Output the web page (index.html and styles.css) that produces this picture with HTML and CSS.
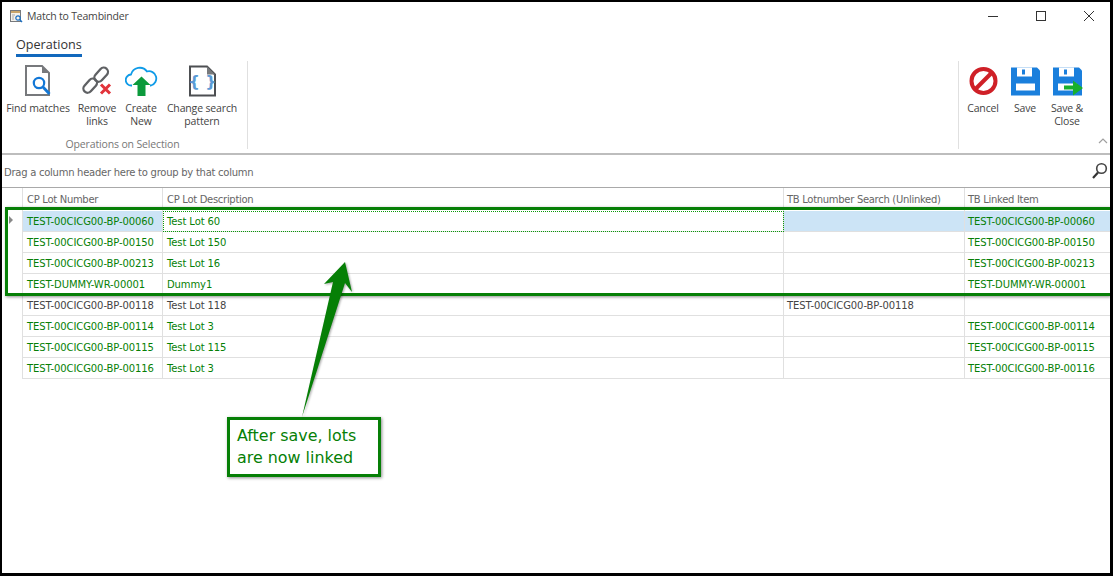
FILE: index.html
```html
<!DOCTYPE html>
<html lang="en">
<head>
<meta charset="utf-8">
<title>Match to Teambinder</title>
<link rel="stylesheet" href="styles.css">
</head>
<body>
<div class="window">
  <header class="titlebar">
    <svg class="app-icon" width="14" height="14" viewBox="0 0 14 14"><rect x="1.5" y="1.5" width="10" height="11" fill="#f4f1ea" stroke="#77797c"/><path d="M2 2h9v2H2z" fill="#c9a56a"/><path d="M3 6h3M3 8h2M3 10h2" stroke="#a9a9a9"/><circle cx="9" cy="9" r="2.2" fill="none" stroke="#1a6fc4" stroke-width="1.2"/><path d="M10.6 10.6L13 13" stroke="#1a6fc4" stroke-width="1.4"/></svg>
    <span class="title">Match to Teambinder</span>
    <div class="controls">
      <svg width="10" height="10" viewBox="0 0 10 10"><path d="M0 5.5h10" stroke="#333"/></svg>
      <svg width="10" height="10" viewBox="0 0 10 10"><rect x=".5" y=".5" width="9" height="9" fill="none" stroke="#333"/></svg>
      <svg width="10" height="10" viewBox="0 0 10 10"><path d="M0 0l10 10M10 0L0 10" stroke="#333"/></svg>
    </div>
  </header>
  <nav class="tabs"><span class="tab">Operations</span></nav>
  <section class="ribbon">
    <div class="group">
      <div class="tools">
        <div class="tool t-find">
          <svg width="26" height="32" viewBox="0 0 26 32"><path d="M1 1h16l7 7v22H1z" fill="#fff" stroke="#77797c" stroke-width="2"/><path d="M17 1v7h7z" fill="#77797c"/><circle cx="14" cy="18" r="5.2" fill="#fff" stroke="#1277d6" stroke-width="2.2"/><path d="M18 22l6.500 7" stroke="#1277d6" stroke-width="2.800"/></svg>
          <span>Find matches</span>
        </div>
        <div class="tool t-remove">
          <svg width="30" height="30" viewBox="0 0 30 30"><g fill="none" stroke="#5f6164" stroke-width="2.300"><rect x="15" y="0.500" width="8.500" height="16" rx="4.200" transform="rotate(42 19 8.500)"/><rect x="4" y="11.500" width="8.500" height="16" rx="4.200" transform="rotate(42 8 19.500)"/></g><path d="M19 18.500l9 9M28 18.500l-9 9" stroke="#e2333a" stroke-width="3"/></svg>
          <span>Remove<br>links</span>
        </div>
        <div class="tool t-create">
          <svg width="33" height="32" viewBox="0 0 33 32"><path d="M7 20.500H6.500a5.500 5.500 0 0 1-.5-11A9 9 0 0 1 22 6.500a6.800 6.800 0 1 1 4 14h-1" fill="none" stroke="#0f9be8" stroke-width="1.800"/><path d="M16.500 11.500l9 8.500h-5v11h-8V20h-5z" fill="#0c9a3c"/></svg>
          <span>Create<br>New</span>
        </div>
        <div class="tool t-pattern">
          <svg width="27" height="31" viewBox="0 0 27 31"><path d="M1 1h17l8 8v21H1z" fill="#fff" stroke="#4d4f52" stroke-width="2"/><path d="M18 1v8h8z" fill="#77797c"/><text x="13.500" y="21" text-anchor="middle" class="braces">{ }</text></svg>
          <span>Change search<br>pattern</span>
        </div>
      </div>
      <div class="group-label">Operations on Selection</div>
    </div>
    <div class="actions">
      <div class="tool t-cancel">
        <svg width="29" height="29" viewBox="0 0 29 29"><circle cx="14.500" cy="14.500" r="12" fill="#fff" stroke="#cf2027" stroke-width="4"/><path d="M6.500 22.500l16-16" stroke="#cf2027" stroke-width="4"/></svg>
        <span>Cancel</span>
      </div>
      <div class="tool t-save">
        <svg width="29" height="29" viewBox="0 0 29 29"><path d="M0 1h26l3 3v25H0z" fill="#1a7fdc"/><path d="M6 1h15v9H6z" fill="#fff"/><path d="M11 3h3v5h-3z" fill="#1a7fdc"/><path d="M5 17h19v7H5z" fill="#fff"/></svg>
        <span>Save</span>
      </div>
      <div class="tool t-close">
        <svg width="31" height="29" viewBox="0 0 31 29"><path d="M0 1h26l3 3v25H0z" fill="#1a7fdc"/><path d="M6 1h15v9H6z" fill="#fff"/><path d="M11 3h3v5h-3z" fill="#1a7fdc"/><path d="M5 17h19v7H5z" fill="#fff"/><path d="M11 19h9v-5l10 7.500-10 7.500v-6h-9z" fill="#18b02c"/></svg>
        <span>Save &amp;<br>Close</span>
      </div>
      <svg class="chevron" width="10" height="6" viewBox="0 0 10 6"><path d="M1 5l4-4 4 4" fill="none" stroke="#a0a0a0" stroke-width="1.200"/></svg>
    </div>
  </section>
  <div class="groupbar">
    <span>Drag a column header here to group by that column</span>
    <svg width="17" height="17" viewBox="0 0 17 17"><circle cx="10.500" cy="6.500" r="4.800" fill="none" stroke="#444" stroke-width="1.600"/><path d="M7 10.500L2 16" stroke="#333" stroke-width="2.200"/></svg>
  </div>
  <div class="grid">
    <div class="row head"><div class="cell ind"></div><div class="cell">CP Lot Number</div><div class="cell">CP Lot Description</div><div class="cell">TB Lotnumber Search (Unlinked)</div><div class="cell">TB Linked Item</div></div>
    <div class="row linked sel"><div class="cell ind"><i class="caret"></i></div><div class="cell">TEST-00CICG00-BP-00060</div><div class="cell focus">Test Lot 60</div><div class="cell"></div><div class="cell">TEST-00CICG00-BP-00060</div></div>
    <div class="row linked"><div class="cell ind"></div><div class="cell">TEST-00CICG00-BP-00150</div><div class="cell">Test Lot 150</div><div class="cell"></div><div class="cell">TEST-00CICG00-BP-00150</div></div>
    <div class="row linked"><div class="cell ind"></div><div class="cell">TEST-00CICG00-BP-00213</div><div class="cell">Test Lot 16</div><div class="cell"></div><div class="cell">TEST-00CICG00-BP-00213</div></div>
    <div class="row linked"><div class="cell ind"></div><div class="cell">TEST-DUMMY-WR-00001</div><div class="cell">Dummy1</div><div class="cell"></div><div class="cell">TEST-DUMMY-WR-00001</div></div>
    <div class="row"><div class="cell ind"></div><div class="cell">TEST-00CICG00-BP-00118</div><div class="cell">Test Lot 118</div><div class="cell">TEST-00CICG00-BP-00118</div><div class="cell"></div></div>
    <div class="row linked"><div class="cell ind"></div><div class="cell">TEST-00CICG00-BP-00114</div><div class="cell">Test Lot 3</div><div class="cell"></div><div class="cell">TEST-00CICG00-BP-00114</div></div>
    <div class="row linked"><div class="cell ind"></div><div class="cell">TEST-00CICG00-BP-00115</div><div class="cell">Test Lot 115</div><div class="cell"></div><div class="cell">TEST-00CICG00-BP-00115</div></div>
    <div class="row linked"><div class="cell ind"></div><div class="cell">TEST-00CICG00-BP-00116</div><div class="cell">Test Lot 3</div><div class="cell"></div><div class="cell">TEST-00CICG00-BP-00116</div></div>
  </div>
</div>
<div class="highlight"></div>
<svg class="arrow" width="60" height="160" viewBox="0 0 60 160"><path d="M45 2L52 32L45 23L2 157L33 22L24 24Z" fill="#067f06"/></svg>
<div class="callout">After save, lots<br>are now linked</div>
</body>
</html>
```
FILE: styles.css
```css
* { box-sizing: border-box; }
html, body { margin: 0; height: 100%; }
body {
  width: 1113px;
  height: 576px;
  background: #000;
  padding: 2px 3px 3px 2px;
  position: relative;
  overflow: hidden;
  font-family: "Open Sans", "Liberation Sans", sans-serif;
}
.window {
  background: #fff;
  height: 100%;
  display: flex;
  flex-direction: column;
}
.titlebar {
  height: 28px;
  display: flex;
  align-items: center;
  padding-left: 7px;
  flex: none;
}
.title { font-size: 10.500px; letter-spacing: -.2px; color: #444; margin-left: 4px; }
.controls {
  margin-left: auto;
  display: flex;
  gap: 38px;
  padding-right: 16px;
}
.tabs { height: 27px; padding: 6px 0 0 14px; flex: none; display: flex; align-items: flex-start; }
.tab {
  height: 21px;
  font-size: 12.600px;
  line-height: 18px;
  color: #333;
  border-bottom: 3px solid #1268bd;
}
.ribbon {
  height: 98px;
  flex: none;
  display: flex;
  justify-content: space-between;
  border-bottom: 2px solid #bdbdbd;
}
.group {
  width: 246px;
  height: 88px;
  margin-top: 4px;
  border-right: 1px solid #e0e0e0;
  display: flex;
  flex-direction: column;
}
.tools { display: flex; flex: none; height: 76px; padding-top: 4px; }
.tool {
  display: flex;
  flex-direction: column;
  align-items: center;
  font-size: 10.500px;
  letter-spacing: -.15px;
  line-height: 13px;
  color: #444;
  text-align: center;
  white-space: nowrap;
}
.tool svg { height: 32px; margin-bottom: 5px; flex: none; }
.t-find { margin-left: 4px; width: 64px; }
.t-remove { margin-left: 7px; width: 40px; }
.t-create { margin-left: 6px; width: 36px; }
.t-pattern { margin-left: 5px; width: 76px; }
.group-label { font-size: 10.500px; letter-spacing: -.15px; color: #777; text-align: center; line-height: 14px; padding-right: 4px; }
.braces { font: 700 16px "DejaVu Sans", sans-serif; fill: #5b9bd5; }
.actions {
  position: relative;
  display: flex;
  height: 88px;
  margin-top: 4px;
  width: 152px;
  border-left: 1px solid #e0e0e0;
  padding: 4px 0 0 7px;
}
.t-cancel { width: 34px; }
.t-save { width: 34px; margin-left: 8px; }
.t-close { width: 36px; margin-left: 7px; }
.t-close svg { margin-left: 3px; }
.chevron { position: absolute; right: 2px; bottom: 5px; }
.groupbar {
  height: 33px;
  flex: none;
  display: flex;
  align-items: center;
  justify-content: space-between;
  padding: 2px 2px 0 2px;
  border-bottom: 1px solid #a9a9a9;
  font: 10px "DejaVu Sans", sans-serif;
  letter-spacing: -.26px;
  color: #666;
}
.groupbar svg { margin-top: -3px; }
.grid {
  font: 10px "DejaVu Sans", sans-serif;
  letter-spacing: -.1px;
  color: #444;
}
.row {
  display: grid;
  grid-template-columns: 21px 140px 621px 181px 145px;
  height: 21px;
}
.head { height: 23px; color: #666; letter-spacing: -.3px; }
.cell {
  border-right: 1px solid #e0e0e0;
  border-bottom: 1px solid #e0e0e0;
  padding-left: 4px;
  line-height: 22px;
  white-space: nowrap;
  overflow: hidden;
}
.cell:nth-child(n+4) { padding-left: 3px; }
.head .cell { line-height: 24px; border-bottom: 0; }
.cell:last-child { border-right: 0; }
.ind { padding: 0; position: relative; border-bottom: 0; }
.linked { color: #067f06; }
.sel .cell:not(.ind):not(.focus) { background: #cce4f6; }
.focus { outline: 1px dotted #0a9a0a; outline-offset: -1px; }
.caret {
  position: absolute;
  left: 7px;
  top: 5px;
  border-left: 4px solid #888;
  border-top: 4px solid transparent;
  border-bottom: 4px solid transparent;
}
.highlight {
  position: absolute;
  left: 5px;
  top: 207px;
  width: 1105px;
  height: 89px;
  border: 3px solid #067f06;
  border-right: 0;
  box-shadow: 1px 1px 3px rgba(0,0,0,.45);
}
.arrow { position: absolute; left: 300px; top: 260px; filter: drop-shadow(1px 1px 1px rgba(0,0,0,.35)); }
.callout {
  position: absolute;
  left: 227px;
  top: 417px;
  width: 154px;
  height: 60px;
  border: 3px solid #067f06;
  background: #fff;
  color: #067f06;
  font: 15.900px/22px "DejaVu Sans", sans-serif;
  padding: 5px 0 0 7px;
  box-shadow: 1px 1px 3px rgba(0,0,0,.45);
}
```
